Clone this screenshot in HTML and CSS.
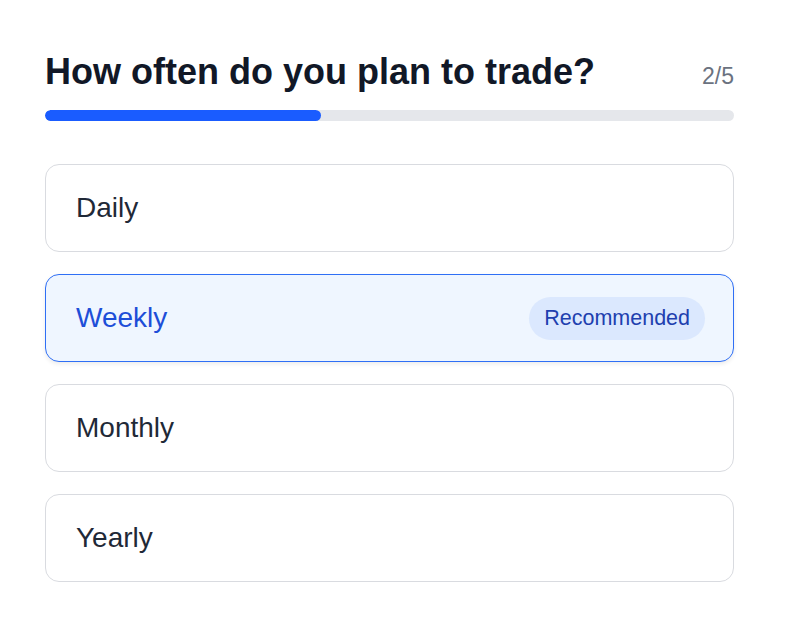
FILE: index.html
```html
<!DOCTYPE html>
<html lang="en">
<head>
    <meta charset="UTF-8">
    <meta name="viewport" content="width=device-width, initial-scale=1.0">
    <title>Trading frequency</title>
    <link rel="stylesheet" href="styles.css">
</head>
<body>
    <div class="quiz">
        <div class="quiz-header">
            <h1>How often do you plan to trade?</h1>
            <span class="step">2/5</span>
        </div>
        <div class="progress">
            <div class="progress-fill" style="width: 40%"></div>
        </div>

        <div class="options">
            <div class="option">Daily</div>
            <div class="option selected">
                <span>Weekly</span>
                <span class="badge">Recommended</span>
            </div>
            <div class="option">Monthly</div>
            <div class="option">Yearly</div>
        </div>
    </div>
</body>
</html>
```

FILE: styles.css
```css
body {
    font-family: 'Liberation Sans', Arial, sans-serif;
    margin: 0;
    padding: 0;
    background: #ffffff;
    color: #1f2937;
}
.quiz {
    width: 689px;
    margin: 0 0 0 45px;
    padding-top: 50px;
}
.quiz-header {
    display: flex;
    justify-content: space-between;
    align-items: baseline;
}
h1 {
    margin: 0;
    font-size: 36px;
    line-height: 44px;
    font-weight: bold;
    color: #111827;
}
.step {
    font-size: 23px;
    color: #6b7280;
}
.progress {
    margin-top: 16px;
    height: 11px;
    background: #e5e7eb;
    border-radius: 6px;
    overflow: hidden;
}
.progress-fill {
    height: 100%;
    background: #1a5cff;
    border-radius: 6px;
}
.options {
    margin-top: 43px;
    display: flex;
    flex-direction: column;
    gap: 22px;
}
.option {
    height: 88px;
    box-sizing: border-box;
    padding: 0 28px 0 30px;
    border: 1px solid #d9dbe0;
    border-radius: 14px;
    display: flex;
    align-items: center;
    justify-content: space-between;
    font-size: 28px;
    color: #1f2937;
}
.option.selected {
    background: #eff6ff;
    border-color: #2f6ff5;
    color: #1d4ed8;
    box-shadow: 0 2px 4px rgba(0, 0, 0, 0.08);
}
.badge {
    background: #dbe8fe;
    color: #1e40af;
    font-size: 21.5px;
    padding: 9px 15px;
    border-radius: 22px;
}
```
